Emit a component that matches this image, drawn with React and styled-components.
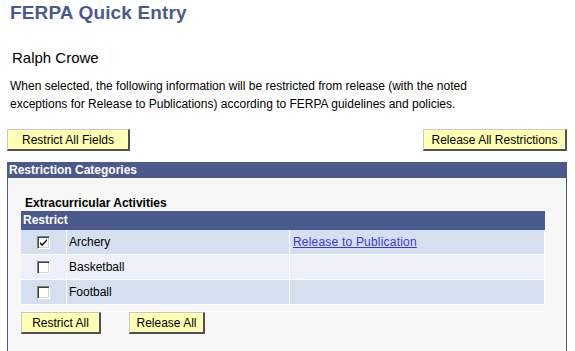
import React from "react";
import styled, { createGlobalStyle } from "styled-components";

const GlobalStyle = createGlobalStyle`
  body {
    margin: 0;
    background: #ffffff;
    font-family: "Liberation Sans", Arial, sans-serif;
    color: #000000;
  }
`;

const navy = "#4b5a8c";

const Page = styled.div`
  width: 560px;
  padding: 2px 8px 0 7px;
`;

const Title = styled.h1`
  margin: 0;
  padding-left: 3px;
  font-size: 19px;
  line-height: 22px;
  letter-spacing: 0.15px;
  font-weight: bold;
  color: ${navy};
`;

const Name = styled.div`
  margin-top: 25px;
  padding-left: 5px;
  font-size: 15px;
  line-height: 18px;
`;

const Intro = styled.p`
  margin: 10px 0 0;
  padding-left: 3px;
  max-width: 500px;
  font-size: 12px;
  line-height: 18px;
`;

const ButtonBar = styled.div`
  display: flex;
  justify-content: ${(p) => p.$justify || "flex-start"};
  gap: ${(p) => p.$gap || 0}px;
  margin-top: ${(p) => p.$top || 0}px;
`;

const Button = styled.button`
  box-sizing: border-box;
  width: ${(p) => p.$w}px;
  height: 22px;
  padding: 0;
  background: #ffffb4;
  border-style: solid;
  border-width: 1px 2px 2px 1px;
  border-color: #c8c8c8 #505050 #505050 #c8c8c8;
  font-family: "Liberation Sans", Arial, sans-serif;
  font-size: 12px;
  color: #000;
  cursor: pointer;
`;

const Panel = styled.section`
  margin-top: 11px;
  border: 1px solid ${navy};
  border-top: none;
  background: #f7f7f7;
  min-height: 200px;
`;

const PanelHeader = styled.div`
  margin: 0 -1px;
  padding-left: 2px;
  height: 16px;
  line-height: 16px;
  background: ${navy};
  color: #fff;
  font-size: 12px;
  font-weight: bold;
`;

const PanelBody = styled.div`
  padding: 18px 0 20px 13px;
`;

const GroupTitle = styled.div`
  padding-left: 4px;
  font-size: 12px;
  line-height: 14px;
  font-weight: bold;
`;

const Grid = styled.div`
  margin-top: 1px;
  width: 524px;
`;

const GridHeader = styled.div`
  height: 19px;
  line-height: 19px;
  padding-left: 2px;
  background: ${navy};
  color: #fff;
  font-size: 12px;
  font-weight: bold;
`;

const Row = styled.div`
  display: grid;
  grid-template-columns: 46px 223px 255px;
  background: ${(p) => (p.$alt ? "#eef0f9" : "#d5dff0")};
`;

const Cell = styled.div`
  display: flex;
  align-items: center;
  justify-content: ${(p) => (p.$center ? "center" : "flex-start")};
  height: 24px;
  padding-left: ${(p) => (p.$center ? 0 : 2)}px;
  border-right: 1px solid #fff;
  border-bottom: 1px solid #fff;
  font-size: 12px;
`;

const Box = styled.span`
  box-sizing: border-box;
  width: 13px;
  height: 13px;
  margin-right: 1px;
  background: #fff;
  border-style: solid;
  border-width: 1px;
  border-color: #808080 #ffffff #ffffff #808080;
  box-shadow: inset 1px 1px 0 #404040, inset -1px -1px 0 #d4d0c8;
  display: flex;
  align-items: center;
  justify-content: center;
`;

const Link = styled.a`
  padding-left: 1px;
  color: #3a3acf;
  letter-spacing: 0.2px;
  text-decoration: underline;
  cursor: pointer;
`;

const Check = ({ on }) => (
  <Box>
    {on && (
      <svg width="7" height="7" viewBox="0 0 7 7">
        <path d="M0 3 L0 5 L2 7 L7 2 L7 0 L2 5 Z" fill="#000" />
      </svg>
    )}
  </Box>
);

const rows = [
  { name: "Archery", on: true, link: "Release to Publication" },
  { name: "Basketball", on: false },
  { name: "Football", on: false },
];

export default function App() {
  return (
    <Page>
      <GlobalStyle />
      <Title>FERPA Quick Entry</Title>
      <Name>Ralph Crowe</Name>
      <Intro>
        When selected, the following information will be restricted from release (with the noted
        exceptions for Release to Publications) according to FERPA guidelines and policies.
      </Intro>
      <ButtonBar $justify="space-between" $top={16}>
        <Button $w={123}>Restrict All Fields</Button>
        <Button $w={144}>Release All Restrictions</Button>
      </ButtonBar>
      <Panel>
        <PanelHeader>Restriction Categories</PanelHeader>
        <PanelBody>
          <GroupTitle>Extracurricular Activities</GroupTitle>
          <Grid>
            <GridHeader>Restrict</GridHeader>
            {rows.map((r, i) => (
              <Row key={r.name} $alt={i % 2 === 1}>
                <Cell $center>
                  <Check on={r.on} />
                </Cell>
                <Cell>{r.name}</Cell>
                <Cell>{r.link && <Link>{r.link}</Link>}</Cell>
              </Row>
            ))}
          </Grid>
          <ButtonBar $gap={28} $top={7}>
            <Button $w={80}>Restrict All</Button>
            <Button $w={76}>Release All</Button>
          </ButtonBar>
        </PanelBody>
      </Panel>
    </Page>
  );
}
